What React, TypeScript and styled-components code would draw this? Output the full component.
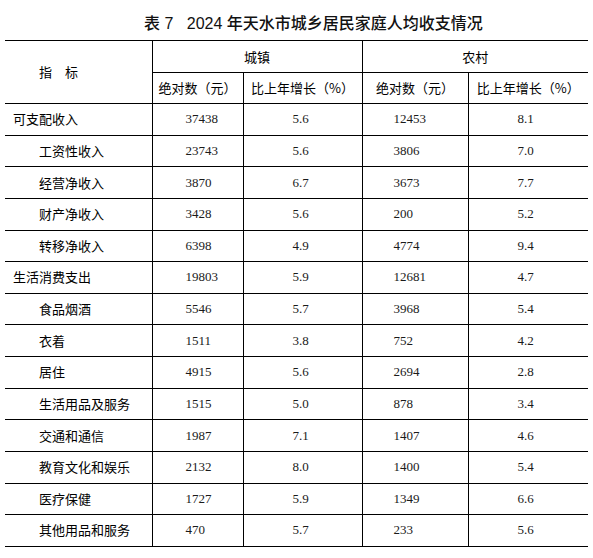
import React, { FC } from "react";
import styled, { createGlobalStyle } from "styled-components";

const GlobalStyle = createGlobalStyle`
  html, body {
    margin: 0;
    padding: 0;
    background: #fff;
  }
  body {
    width: 593px;
    height: 558px;
    overflow: hidden;
    color: #000;
    font-family: "Noto Sans CJK SC", "DejaVu Sans", sans-serif;
  }
`;

const Page = styled.div`
  display: flex;
  flex-direction: column;
  padding: 0 5px;
`;

const Title = styled.h1`
  margin: 0;
  height: 40px;
  padding: 12px 0 0 34px;
  box-sizing: border-box;
  text-align: center;
  font-family: "Liberation Sans", "Noto Sans CJK SC", sans-serif;
  font-size: 16px;
  line-height: 20px;
  font-weight: 500;
  white-space: pre;
  color: #111;
  span {
    font-family: "Noto Sans CJK SC", sans-serif;
  }
`;

const Table = styled.table`
  width: 583px;
  border-collapse: collapse;
  table-layout: fixed;
  border-top: 1px solid #000;
`;

const HeadRow = styled.tr<{ $h: number }>`
  height: ${(p) => p.$h}px;
`;

const HeadCell = styled.th<{ $left?: boolean; $pad?: number }>`
  padding: 0 0 0 ${(p) => (p.$pad ? `${p.$pad}px` : "0")};
  font-family: "Noto Sans CJK SC", sans-serif;
  font-size: 13px;
  font-weight: 400;
  line-height: 16px;
  text-align: ${(p) => (p.$left ? "left" : "center")};
  vertical-align: middle;
  border-bottom: 1px solid #000;
  border-left: ${(p) => (p.$left ? "none" : "1px solid #000")};
  white-space: nowrap;
`;

const Row = styled.tr`
  height: 31.64px;
`;

const LabelCell = styled.td<{ $sub?: boolean }>`
  padding: 0 0 0 ${(p) => (p.$sub ? "34px" : "8px")};
  font-family: "Noto Sans CJK SC", sans-serif;
  font-size: 13px;
  line-height: 16px;
  vertical-align: middle;
  border-bottom: 1px solid #000;
  white-space: nowrap;
`;

const NumCell = styled.td<{ $pad: number }>`
  padding: 0 0 0 ${(p) => p.$pad}px;
  font-family: "Liberation Serif", "Times New Roman", serif;
  font-size: 13px;
  line-height: 16px;
  color: #1a1a1a;
  vertical-align: middle;
  border-bottom: 1px solid #000;
  border-left: 1px solid #000;
  white-space: nowrap;
`;

type Item = [string, boolean, string, string, string, string];

const rows: Item[] = [
  ["可支配收入", false, "37438", "5.6", "12453", "8.1"],
  ["工资性收入", true, "23743", "5.6", "3806", "7.0"],
  ["经营净收入", true, "3870", "6.7", "3673", "7.7"],
  ["财产净收入", true, "3428", "5.6", "200", "5.2"],
  ["转移净收入", true, "6398", "4.9", "4774", "9.4"],
  ["生活消费支出", false, "19803", "5.9", "12681", "4.7"],
  ["食品烟酒", true, "5546", "5.7", "3968", "5.4"],
  ["衣着", true, "1511", "3.8", "752", "4.2"],
  ["居住", true, "4915", "5.6", "2694", "2.8"],
  ["生活用品及服务", true, "1515", "5.0", "878", "3.4"],
  ["交通和通信", true, "1987", "7.1", "1407", "4.6"],
  ["教育文化和娱乐", true, "2132", "8.0", "1400", "5.4"],
  ["医疗保健", true, "1727", "5.9", "1349", "6.6"],
  ["其他用品和服务", true, "470", "5.7", "233", "5.6"],
];

const App: FC = () => {
  return (
    <Page>
      <GlobalStyle />
      <Title>
        <span>表</span> 7{"   "}2024 <span>年天水市城乡居民家庭人均收支情况</span>
      </Title>
      <Table>
        <colgroup>
          <col style={{ width: 147 }} />
          <col style={{ width: 91 }} />
          <col style={{ width: 119 }} />
          <col style={{ width: 106 }} />
          <col style={{ width: 120 }} />
        </colgroup>
        <thead>
          <HeadRow $h={32}>
            <HeadCell rowSpan={2} $left $pad={34}>
              指　标
            </HeadCell>
            <HeadCell colSpan={2}>城镇</HeadCell>
            <HeadCell colSpan={2}>农村</HeadCell>
          </HeadRow>
          <HeadRow $h={31}>
            <HeadCell>绝对数（元）</HeadCell>
            <HeadCell>比上年增长（%）</HeadCell>
            <HeadCell>绝对数（元）</HeadCell>
            <HeadCell>比上年增长（%）</HeadCell>
          </HeadRow>
        </thead>
        <tbody>
          {rows.map(([label, sub, a, b, c, d]) => (
            <Row key={label}>
              <LabelCell $sub={sub}>{label}</LabelCell>
              <NumCell $pad={33}>{a}</NumCell>
              <NumCell $pad={49}>{b}</NumCell>
              <NumCell $pad={31}>{c}</NumCell>
              <NumCell $pad={49}>{d}</NumCell>
            </Row>
          ))}
        </tbody>
      </Table>
    </Page>
  );
};

export default App;
